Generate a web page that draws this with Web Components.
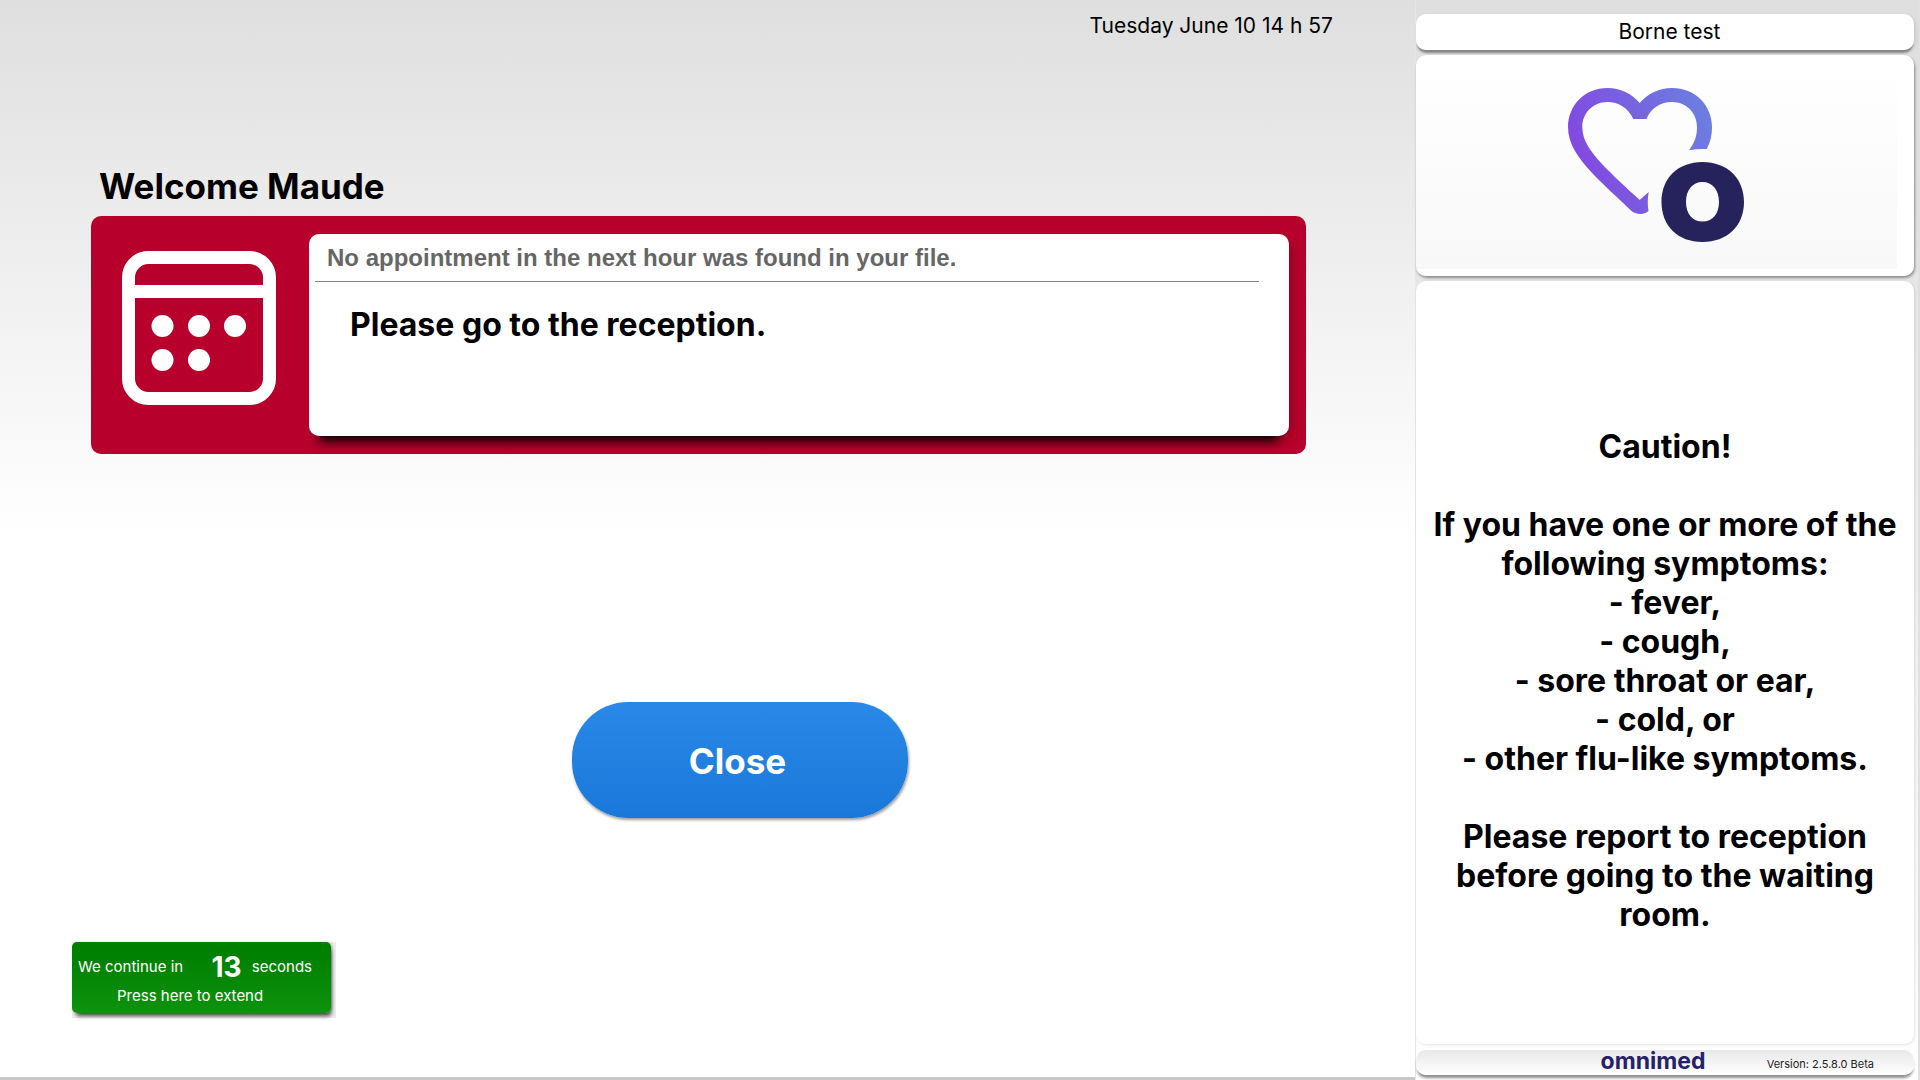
<!DOCTYPE html>
<html lang="en">
<head>
<meta charset="utf-8">
<title>Borne test</title>
<style>
html, body { margin: 0; height: 100%; }
body { font-family: Inter, "Liberation Sans", sans-serif; color: #000; background: #fff; }
</style>
</head>
<body>
<kiosk-app>
  <kiosk-main slot="main">
    <kiosk-clock>Tuesday June 10 14 h 57</kiosk-clock>
    <kiosk-notice>
      <span slot="title">Welcome Maude</span>
      <calendar-icon slot="icon"></calendar-icon>
      <span slot="reason">No appointment in the next hour was found in your file.</span>
      <span slot="action">Please go to the reception.</span>
    </kiosk-notice>
    <kiosk-button>Close</kiosk-button>
    <kiosk-countdown><span slot="count">13</span></kiosk-countdown>
  </kiosk-main>
  <kiosk-sidebar slot="side">
    <kiosk-panel class="name">Borne test</kiosk-panel>
    <kiosk-panel class="logo"><brand-logo></brand-logo></kiosk-panel>
    <kiosk-panel class="message">Caution!

If you have one or more of the following symptoms:
- fever,
- cough,
- sore throat or ear,
- cold, or
- other flu-like symptoms.

Please report to reception before going to the waiting room.</kiosk-panel>
    <kiosk-footer><span slot="brand">omnimed</span><span slot="version">Version: 2.5.8.0 Beta</span></kiosk-footer>
  </kiosk-sidebar>
</kiosk-app>

<script>
function define(name, html) {
  const template = document.createElement('template');
  template.innerHTML = html;
  customElements.define(name, class extends HTMLElement {
    constructor() {
      super();
      this.attachShadow({ mode: 'open' }).append(template.content.cloneNode(true));
    }
  });
}

define('kiosk-app', `
<style>
:host { display: grid; grid-template-columns: minmax(0, 1fr) 505px; min-height: 100vh; }
</style>
<slot name="main"></slot><slot name="side"></slot>`);

define('kiosk-main', `
<style>
:host { display: flex; flex-direction: column; box-sizing: border-box; padding: 12px 0 59px 72px;
  background: linear-gradient(#dfdfdf, #fff 50%); border-bottom: 3px solid #c8c8cb; }
::slotted(kiosk-clock) { align-self: flex-end; margin-right: 82px; }
::slotted(kiosk-notice) { margin: 124px 109px 0 19px; }
::slotted(kiosk-button) { align-self: center; margin-top: 248px; }
::slotted(kiosk-countdown) { align-self: flex-start; margin-top: auto; }
</style>
<slot></slot>`);

define('kiosk-clock', `
<style>:host { display: block; font-size: 21px; line-height: 28px; }</style>
<slot></slot>`);

define('kiosk-notice', `
<style>
:host { display: block; }
h1 { margin: 0; padding-left: 8px; font-size: 35px; line-height: 44px; font-weight: 700; }
section { display: flex; align-items: flex-start; margin-top: 8px; padding: 18px 17px 18px 31px; gap: 33px;
  background: #b7002b; border-radius: 10px; }
::slotted(calendar-icon) { margin-top: 17px; }
.box { flex: 1; min-height: 202px; box-sizing: border-box; padding: 9px 30px 0 6px; background: #fff; border-radius: 10px;
  box-shadow: 8px 4px 12px -6px rgba(0,0,0,.25), 0 16px 10px -10px rgba(0,0,0,.9); }
.reason { margin: 0; padding: 0 12px 8px; border-bottom: 1px solid #808080;
  font: bold 24px/30px "Liberation Sans", Arial, sans-serif; color: #666; }
.action { margin: 23px 0 0 35px; font-size: 32px; line-height: 40px; font-weight: 700; }
</style>
<h1><slot name="title"></slot></h1>
<section>
  <slot name="icon"></slot>
  <div class="box">
    <p class="reason"><slot name="reason"></slot></p>
    <p class="action"><slot name="action"></slot></p>
  </div>
</section>`);

define('calendar-icon', `
<style>:host { display: block; } svg { display: block; width: 154px; height: 154px; }</style>
<svg viewBox="0 0 154 154" aria-hidden="true">
  <rect x="6.5" y="6.5" width="141" height="141" rx="20" fill="none" stroke="#fff" stroke-width="13"/>
  <path d="M12 34h130v13H12z" fill="#fff"/>
  <g fill="#fff"><circle cx="40.500" cy="75" r="11"/><circle cx="77" cy="75" r="11"/><circle cx="113" cy="75" r="11"/>
  <circle cx="40.500" cy="109" r="11"/><circle cx="77" cy="109" r="11"/></g>
</svg>`);

define('kiosk-button', `
<style>
:host { display: block; padding-right: 8px; }
button { display: block; width: 336px; height: 116px; padding: 2px 4px 0 0; border: 0; border-radius: 56px;
  background: linear-gradient(#2a88e8, #1a78da); box-shadow: 1px 2px 3px rgba(0,0,0,.4);
  font: 700 35px/44px Inter, sans-serif; color: #fff; cursor: pointer; }
</style>
<button type="button"><slot></slot></button>`);

define('kiosk-countdown', `
<style>
:host { display: block; background: #eee; padding: 0 5px 5px 0; }
button { display: grid; grid-template-rows: 32px 24px; row-gap: 1px; align-content: center; width: 259px; height: 71px; padding: 3px 19px 0 6px; border: 0; border-radius: 5px;
  background: linear-gradient(#008000 20%, #0e930e); box-shadow: 2px 0 3px -1px rgba(0,0,0,.3), 2px 5px 4px -2px rgba(0,0,0,.7);
  font: 15px/24px Inter, sans-serif; color: #fff; text-align: left; cursor: pointer; }
.row { display: flex; justify-content: space-between; align-items: center; }
b { margin-left: 18px; font-size: 28px; line-height: 32px; font-weight: 700; }
.hint { padding-left: 39px; }
</style>
<button type="button">
  <span class="row"><span>We continue in</span><b><slot name="count"></slot></b><span>seconds</span></span>
  <span class="hint">Press here to extend</span>
</button>`);

define('kiosk-sidebar', `
<style>
:host { display: flex; flex-direction: column; gap: 5px; box-sizing: border-box; padding: 14px 6px 5px 1px;
  background: linear-gradient(#dedede, #fff); box-shadow: inset 1px 0 #e6e6e6, inset -2px 0 #e0e0e0; }
::slotted(.name) { height: 36px; font-size: 21px; line-height: 28px; padding-left: 9px;
  --shade: 0 4px 2px -1px rgba(0,0,0,.35), 2px 2px 4px rgba(0,0,0,.1); }
::slotted(.logo) { height: 221px; padding-right: 18px; padding-bottom: 2px;
  --film: linear-gradient(#fff, #f8f8f8) 0 6px / calc(100% - 17px) calc(100% - 13px) no-repeat;
  --shade: 1px 2px 3px rgba(0,0,0,.4); }
::slotted(.message) { flex: 1; padding: 36px 12px 0; font-size: 32px; line-height: 39px; font-weight: 700; white-space: pre-line; }
</style>
<slot></slot>`);

define('kiosk-panel', `
<style>
:host { display: flex; align-items: center; justify-content: center; box-sizing: border-box;
  background: var(--film, linear-gradient(#fff, #fff)), linear-gradient(#fff, #fff); border-radius: 10px;
  text-align: center; box-shadow: var(--shade, 1px 1px 3px rgba(0,0,0,.1)); }
</style>
<div><slot></slot></div>`);

define('brand-logo', `
<style>:host { display: block; } svg { display: block; width: 176px; height: 154px; }</style>
<svg viewBox="1568 88 176 154" role="img" aria-label="omnimed">
  <defs><linearGradient id="heart" gradientUnits="userSpaceOnUse" x1="1572" y1="160" x2="1712" y2="110">
    <stop offset="0" stop-color="#8347e0"/><stop offset="1" stop-color="#6b80e0"/></linearGradient></defs>
  <path fill="url(#heart)" d="M1639.700 103C1632 93.500 1620 88 1607.500 88C1585 88 1568 105 1568 127C1568 144 1578 158 1594 175C1604 185.500 1617 197 1631 210.500C1635 214.500 1644 215.500 1648.500 211C1647.500 205 1647.500 198 1648.700 192L1639.700 200C1627 188.500 1613 175.500 1602 164C1590 151 1582.300 140 1582.300 127C1582.300 113 1593 102 1607.500 102C1618 102 1628 107.500 1633.300 119H1646.500C1651 108 1660.500 102 1672 102C1686.500 102 1697 113 1697 127C1697 136 1694.500 143 1689 150.300Q1698 148.500 1706.700 149C1710.500 142 1712 135 1712 127C1712 105 1695 88 1672 88C1659.500 88 1647.500 93.500 1639.700 103Z"/>
  <path fill="#25225c" fill-rule="evenodd" d="M1702.500 162C1727 162 1744 178 1744 202S1727 242 1702.500 242S1661.500 226 1661.500 202S1678 162 1702.500 162ZM1702.500 182C1692.500 182 1686 190 1686 202S1692.500 221.500 1702.500 221.500S1719 214 1719 202S1712.500 182 1702.500 182Z"/>
</svg>`);

define('kiosk-footer', `
<style>
:host { display: grid; grid-template-columns: 1fr auto 1fr; align-items: center; box-sizing: border-box; height: 25px; padding-right: 24px; margin-top: 1px; border-radius: 10px;
  background: linear-gradient(#e8e8e8, #fff); box-shadow: 0 4px 3px -1px rgba(0,0,0,.45); }
.brand { grid-column: 2; padding-bottom: 2px; font-size: 23px; line-height: 23px; font-weight: 700; color: #25226a; }
.version { justify-self: end; padding-right: 16px; font-size: 11px; line-height: 16px; padding-top: 3px; color: #222; }
</style>
<span class="brand"><slot name="brand"></slot></span>
<span class="version"><slot name="version"></slot></span>`);
</script>
</body>
</html>
